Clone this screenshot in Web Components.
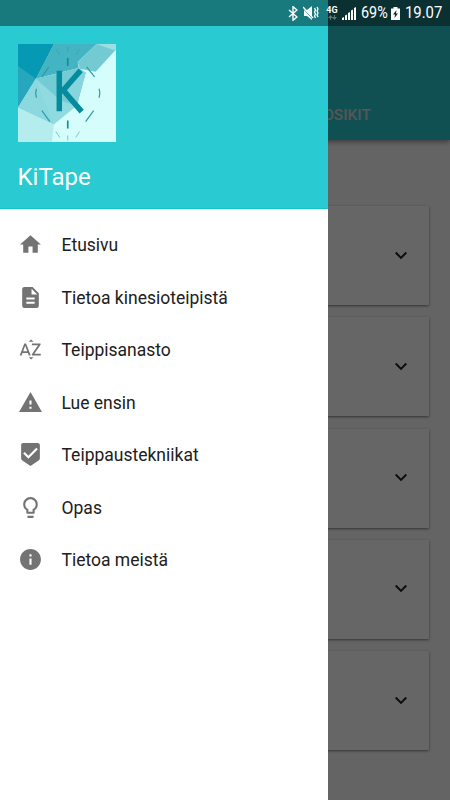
<!DOCTYPE html>
<html lang="fi">
<head>
<meta charset="utf-8">
<title>KiTape</title>
<style>
html, body { margin: 0; height: 100%; overflow: hidden; }
body { font-family: Roboto, "Noto Sans", sans-serif; }
</style>
</head>
<body>
<kt-app></kt-app>
<script>
const define = (name, html, setup) => customElements.define(name, class extends HTMLElement {
  constructor() {
    super();
    this.attachShadow({ mode: 'open' }).innerHTML = html;
  }
  connectedCallback() { if (setup) setup(this, this.shadowRoot); }
});

const ICONS = {
  home: '<path d="M10 20v-6h4v6h5v-8h3L12 3 2 12h3v8z"/>',
  doc: '<path d="M14 2H6c-1.1 0-1.99.9-1.99 2L4 20c0 1.1.89 2 1.99 2H18c1.1 0 2-.9 2-2V8l-6-6zm2 16H8v-2h8v2zm0-4H8v-2h8v2zm-3-5V3.500L18.500 9H13z"/>',
  az: '<path d="M14.940 4.660h-4.720l2.360-2.360zm-4.690 14.710h4.660l-2.330 2.330zM6.100 6.270L1.600 17.730h1.840l.92-2.450h5.110l.92 2.450h1.840L7.740 6.270H6.100zm-1.130 7.370l1.940-5.180 1.940 5.180H4.970zm10.760 2.500h6.120v1.590h-8.530v-1.290l5.920-8.560h-5.880v-1.600h8.300v1.260l-5.930 8.600z"/>',
  warn: '<path d="M1 21h22L12 2 1 21zm12-3h-2v-2h2v2zm0-4h-2v-4h2v4z"/>',
  check: '<path d="M19 1H5c-1.100 0-1.990.9-1.990 2L3 15.930c0 .69.35 1.300.88 1.660L12 23l8.110-5.410c.53-.36.88-.97.88-1.660L21 3c0-1.100-.9-2-2-2zm-9 15l-5-5 1.410-1.410L10 13.170l7.590-7.590L19 7l-9 9z"/>',
  bulb: '<path d="M9 21c0 .55.45 1 1 1h4c.55 0 1-.45 1-1v-1H9v1zm3-19C8.140 2 5 5.140 5 9c0 2.380 1.190 4.470 3 5.740V17c0 .55.45 1 1 1h6c.55 0 1-.45 1-1v-2.260c1.810-1.270 3-3.360 3-5.740 0-3.860-3.140-7-7-7zm2.850 11.100l-.85.6V16h-4v-2.300l-.85-.6C7.800 12.160 7 10.630 7 9c0-2.760 2.240-5 5-5s5 2.240 5 5c0 1.630-.8 3.160-2.150 4.100z"/>',
  info: '<path d="M12 2C6.480 2 2 6.480 2 12s4.480 10 10 10 10-4.480 10-10S17.520 2 12 2zm1 15h-2v-6h2v6zm0-8h-2V7h2v2z"/>',
  chevron: '<path d="M7.410 7.840L12 12.420l4.590-4.580L18 9.250l-6 6-6-6z"/>'
};

define('kt-icon', `
<style>:host{display:block;width:24px;height:24px;flex:none}svg{display:block;width:100%;height:100%;fill:currentColor}</style>
<svg viewBox="0 0 24 24"></svg>`,
(el, root) => { root.querySelector('svg').innerHTML = ICONS[el.getAttribute('name')]; });

define('kt-logo', `
<style>:host{display:block;width:98.500px;height:98.500px}svg{display:block}</style>
<svg width="98.500" height="98.500" viewBox="0 0 99 99">
  <rect width="99" height="99" fill="#d4fdfb"/>
  <path d="M0 0H36L18 35L0 64Z" fill="#26a7bd"/>
  <path d="M0 0H36L18 35L0 22Z" fill="#0599b3"/>
  <path d="M36 0H79L60 18L61 24L18 35Z" fill="#45b4c2"/>
  <path d="M79 0H99V5L78 28L62 25L60 18Z" fill="#74cad3"/>
  <path d="M79 0H99V5L96 6Z" fill="#9cdfe3"/>
  <path d="M18 35L61 24L68 29L59 62L36 81L0 64Z" fill="#90dbe0"/>
  <path d="M18 35L36 81L0 64Z" fill="#8bd8de"/>
  <path d="M18 35L61 24L68 29L59 62L43 57Z" fill="#73cbd4"/>
  <path d="M0 64L36 81L34 99H0Z" fill="#b5edee"/>
  <path d="M61 24L68 29L59 62L50 48Z" fill="#86d4dc"/>
  <g fill="none" stroke="#2f9aa9" stroke-width="1.200">
    <path d="M50 14V22M50 77V85" stroke="#128a9b" stroke-width="1.600"/>
    <path d="M31 23L24 33M69 23L77 33M24 67L32 78M76 67L68 78"/>
    <path d="M18.500 45Q17 49 18.500 54M81.500 45Q83 49 81.500 54"/>
    <path d="M50 3V8M50 92V97M38 5L42 11M62 5L58 11M38 88L42 94M62 88L58 94" stroke-width=".9" opacity=".6"/>
  </g>
  <path d="M41.500 27V67.500M63 26.500L45.500 46.500L64 68" fill="none" stroke="#058b9e" stroke-width="5.500"/>
</svg>`);

define('kt-status-bar', `
<style>
:host{display:flex;box-sizing:border-box;height:26px;padding-right:8px;align-items:center;justify-content:flex-end;color:#fff;font-size:16.500px;line-height:26px;background:linear-gradient(90deg,#197a7e 328px,#0a3032 328px)}
svg{display:block;flex:none} span{flex:none;white-space:nowrap}
.mute{margin-left:5px}
.net{display:flex;flex-direction:column;align-items:center;width:12px;margin-left:7px;font-size:9px;line-height:9px;font-weight:700}
.sig{margin-left:4px}
.pct{width:26px;margin-left:5px;transform:scaleX(.87);transform-origin:0 50%}
.bat{margin-left:4px}
.time{width:37px;margin-left:5px;transform:scaleX(.9);transform-origin:0 50%}
</style>
<svg width="10" height="15" viewBox="0 0 10 15"><path d="M1 4L9 11L5 14.300V.7L9 4L1 11" fill="none" stroke="#fff" stroke-width="1.400"/></svg>
<svg class="mute" width="16" height="16" viewBox="0 0 16 16"><path d="M1 5H4L9 1V15L4 11H1Z" fill="#fff"/><path d="M0 3.300L10 14.300" stroke="#197a7e" stroke-width="1"/><path d="M0 2L10 13" stroke="#fff" stroke-width="1.300"/><path d="M11.500 3l1 2-1 2 1 2-1 2 1 2M14 2l1 2-1 2 1 2-1 2 1 2" fill="none" stroke="#fff" stroke-width="1.300"/></svg>
<div class="net"><span>4G</span><svg width="9" height="6" viewBox="0 0 9 6"><path d="M2.500 0L5 3H3V5H2V3H0ZM6 0H7V2H9L6.500 5 4 2H6Z" fill="#637779"/></svg></div>
<svg class="sig" width="14" height="13" viewBox="0 0 14 13"><path d="M0 11L2 10v3H0zM3 8.500L5 7.500V13H3zM6 6l2-1v8H6zM9 3.500l2-1V13H9zM12 1l2-1v13h-2z" fill="#fff"/></svg>
<span class="pct">69%</span>
<svg class="bat" width="9" height="13" viewBox="0 0 9 13"><path d="M2.500 0h4v1.500H9V13H0V1.500h2.500z" fill="#fff"/><path d="M5.500 3L2 7.500h2L3.500 11 7 6.500H5z" fill="#0a3032"/></svg>
<span class="time">19.07</span>`);

define('kt-tab-bar', `
<style>:host{display:flex;box-sizing:border-box;height:140px;padding:0 79px 15.500px 0;justify-content:flex-end;align-items:flex-end;background:#29c8cd;box-shadow:0 2px 5px rgba(0,0,0,.4);font-size:15.500px;line-height:20px;font-weight:500;color:#ded4d6;position:relative}</style>
<slot></slot>`);

define('kt-card', `
<style>:host{display:flex;box-sizing:border-box;height:99px;padding-right:16px;align-items:center;justify-content:flex-end;background:#fff;border-radius:1px;box-shadow:0 1px 3px rgba(0,0,0,.4),0 1px 2px rgba(0,0,0,.12);color:#222}</style>
<kt-icon name="chevron"></kt-icon>`);

define('kt-page', `
<style>:host{display:block;height:100%;background:#fafafa}main{display:grid;gap:12.300px;padding:66px 21.500px 0}</style>
<kt-tab-bar>OSIKIT</kt-tab-bar>
<main><kt-card></kt-card><kt-card></kt-card><kt-card></kt-card><kt-card></kt-card><kt-card></kt-card></main>`);

define('kt-nav-item', `
<style>:host{display:flex;height:52.500px;align-items:center;gap:18.500px;padding-left:18px;font-size:17.500px;line-height:24px;color:#202020}kt-icon{color:#737373;width:25px;height:25px}span{padding-top:1px}</style>
<kt-icon></kt-icon><span><slot></slot></span>`,
(el, root) => {
  const icon = document.createElement('kt-icon');
  icon.setAttribute('name', el.getAttribute('icon'));
  root.querySelector('kt-icon').replaceWith(icon);
});

define('kt-drawer', `
<style>
:host{display:flex;flex-direction:column;background:#fff}
header{box-sizing:border-box;height:209px;padding:43.500px 17.500px 0;background:#29cad1;border-bottom:1px solid #10c3cd;color:#fff;font-size:24px;line-height:30px}
.name{margin-top:20px}
nav{padding-top:9.500px}
</style>
<header><kt-logo></kt-logo><div class="name">KiTape</div></header>
<nav>
<kt-nav-item icon="home">Etusivu</kt-nav-item>
<kt-nav-item icon="doc">Tietoa kinesioteipistä</kt-nav-item>
<kt-nav-item icon="az">Teippisanasto</kt-nav-item>
<kt-nav-item icon="warn">Lue ensin</kt-nav-item>
<kt-nav-item icon="check">Teippaustekniikat</kt-nav-item>
<kt-nav-item icon="bulb">Opas</kt-nav-item>
<kt-nav-item icon="info">Tietoa meistä</kt-nav-item>
</nav>`);

define('kt-app', `
<style>
:host{display:block;position:relative;width:450px;height:800px;overflow:hidden}
.scrim{position:absolute;inset:0;background:rgba(0,0,0,.6)}
kt-drawer{position:absolute;left:0;top:0;bottom:0;width:328px}
kt-status-bar{position:absolute;left:0;right:0;top:0}
</style>
<kt-page></kt-page><div class="scrim"></div><kt-drawer></kt-drawer><kt-status-bar></kt-status-bar>`);
</script>
</body>
</html>
